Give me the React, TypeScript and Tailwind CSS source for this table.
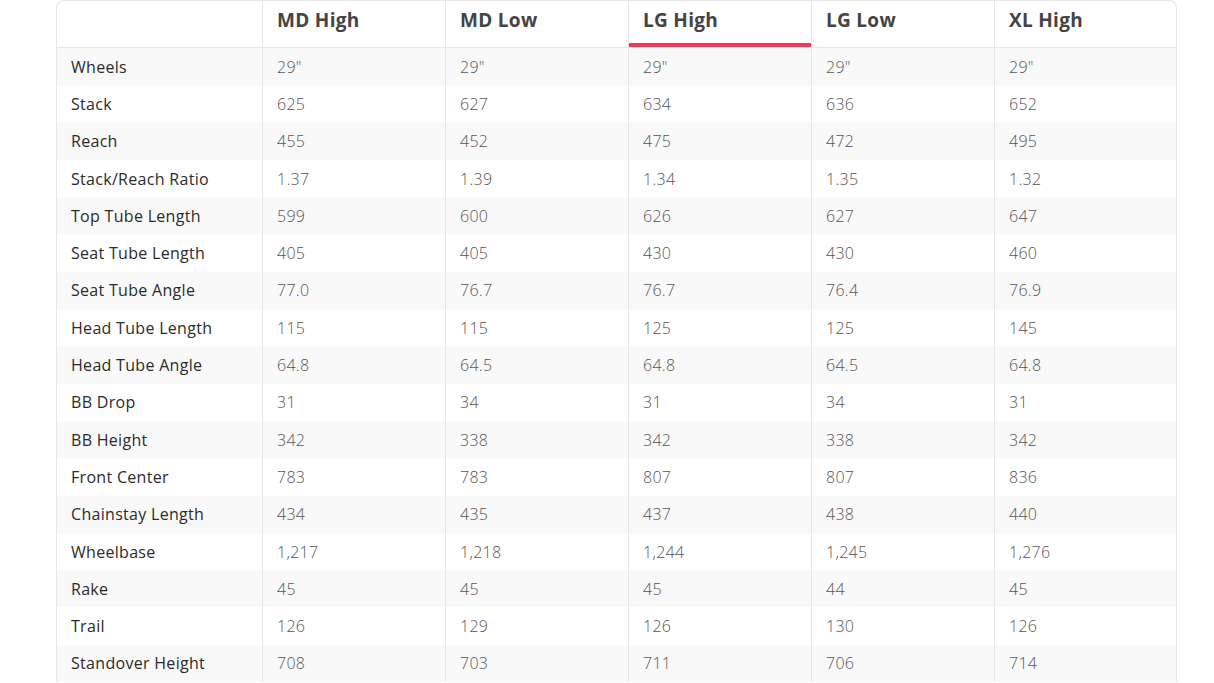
import React from 'react';

const sizes = ['MD High', 'MD Low', 'LG High', 'LG Low', 'XL High'];
const activeSize = 'LG High';

const rows: [string, string[]][] = [
  ['Wheels', ['29"', '29"', '29"', '29"', '29"']],
  ['Stack', ['625', '627', '634', '636', '652']],
  ['Reach', ['455', '452', '475', '472', '495']],
  ['Stack/Reach Ratio', ['1.37', '1.39', '1.34', '1.35', '1.32']],
  ['Top Tube Length', ['599', '600', '626', '627', '647']],
  ['Seat Tube Length', ['405', '405', '430', '430', '460']],
  ['Seat Tube Angle', ['77.0', '76.7', '76.7', '76.4', '76.9']],
  ['Head Tube Length', ['115', '115', '125', '125', '145']],
  ['Head Tube Angle', ['64.8', '64.5', '64.8', '64.5', '64.8']],
  ['BB Drop', ['31', '34', '31', '34', '31']],
  ['BB Height', ['342', '338', '342', '338', '342']],
  ['Front Center', ['783', '783', '807', '807', '836']],
  ['Chainstay Length', ['434', '435', '437', '438', '440']],
  ['Wheelbase', ['1,217', '1,218', '1,244', '1,245', '1,276']],
  ['Rake', ['45', '45', '45', '44', '45']],
  ['Trail', ['126', '129', '126', '130', '126']],
  ['Standover Height', ['708', '703', '711', '706', '714']],
];

export default function App() {
  return (
    <div className="min-h-screen bg-white pl-[56px] font-['Open_Sans',sans-serif]">
      <div className="w-[1121px] overflow-hidden rounded-t-lg border-x border-t border-[#e6e6e6]">
        {/* header */}
        <div className="grid h-[47px] grid-cols-[205px_repeat(5,183px)] border-b border-[#e6e6e6]">
          <div />
          {sizes.map((s) => (
            <div
              key={s}
              className="relative flex items-start border-l border-[#e6e6e6] pl-[14px] pt-[5px] text-[19px] font-bold tracking-[0.3px] text-[#444]"
            >
              {s}
              {s === activeSize && (
                <div className="absolute bottom-0 left-0 right-0 h-[4px] bg-[#f0395a]" />
              )}
            </div>
          ))}
        </div>
        {/* body */}
        {rows.map(([label, vals], i) => (
          <div
            key={label}
            className={`grid h-[37.3px] grid-cols-[205px_repeat(5,183px)] ${i % 2 === 0 ? 'bg-[#f9f9f9]' : 'bg-white'}`}
          >
            <div className="flex items-center pl-[14px] text-[16px] tracking-[0.3px] text-[#2b2b2b]">{label}</div>
            {vals.map((v, j) => (
              <div
                key={j}
                className="flex items-center border-l border-[#e6e6e6] pl-[14px] text-[16px] font-light tracking-[0.3px] text-[#555]"
              >
                {v}
              </div>
            ))}
          </div>
        ))}
      </div>
    </div>
  );
}
